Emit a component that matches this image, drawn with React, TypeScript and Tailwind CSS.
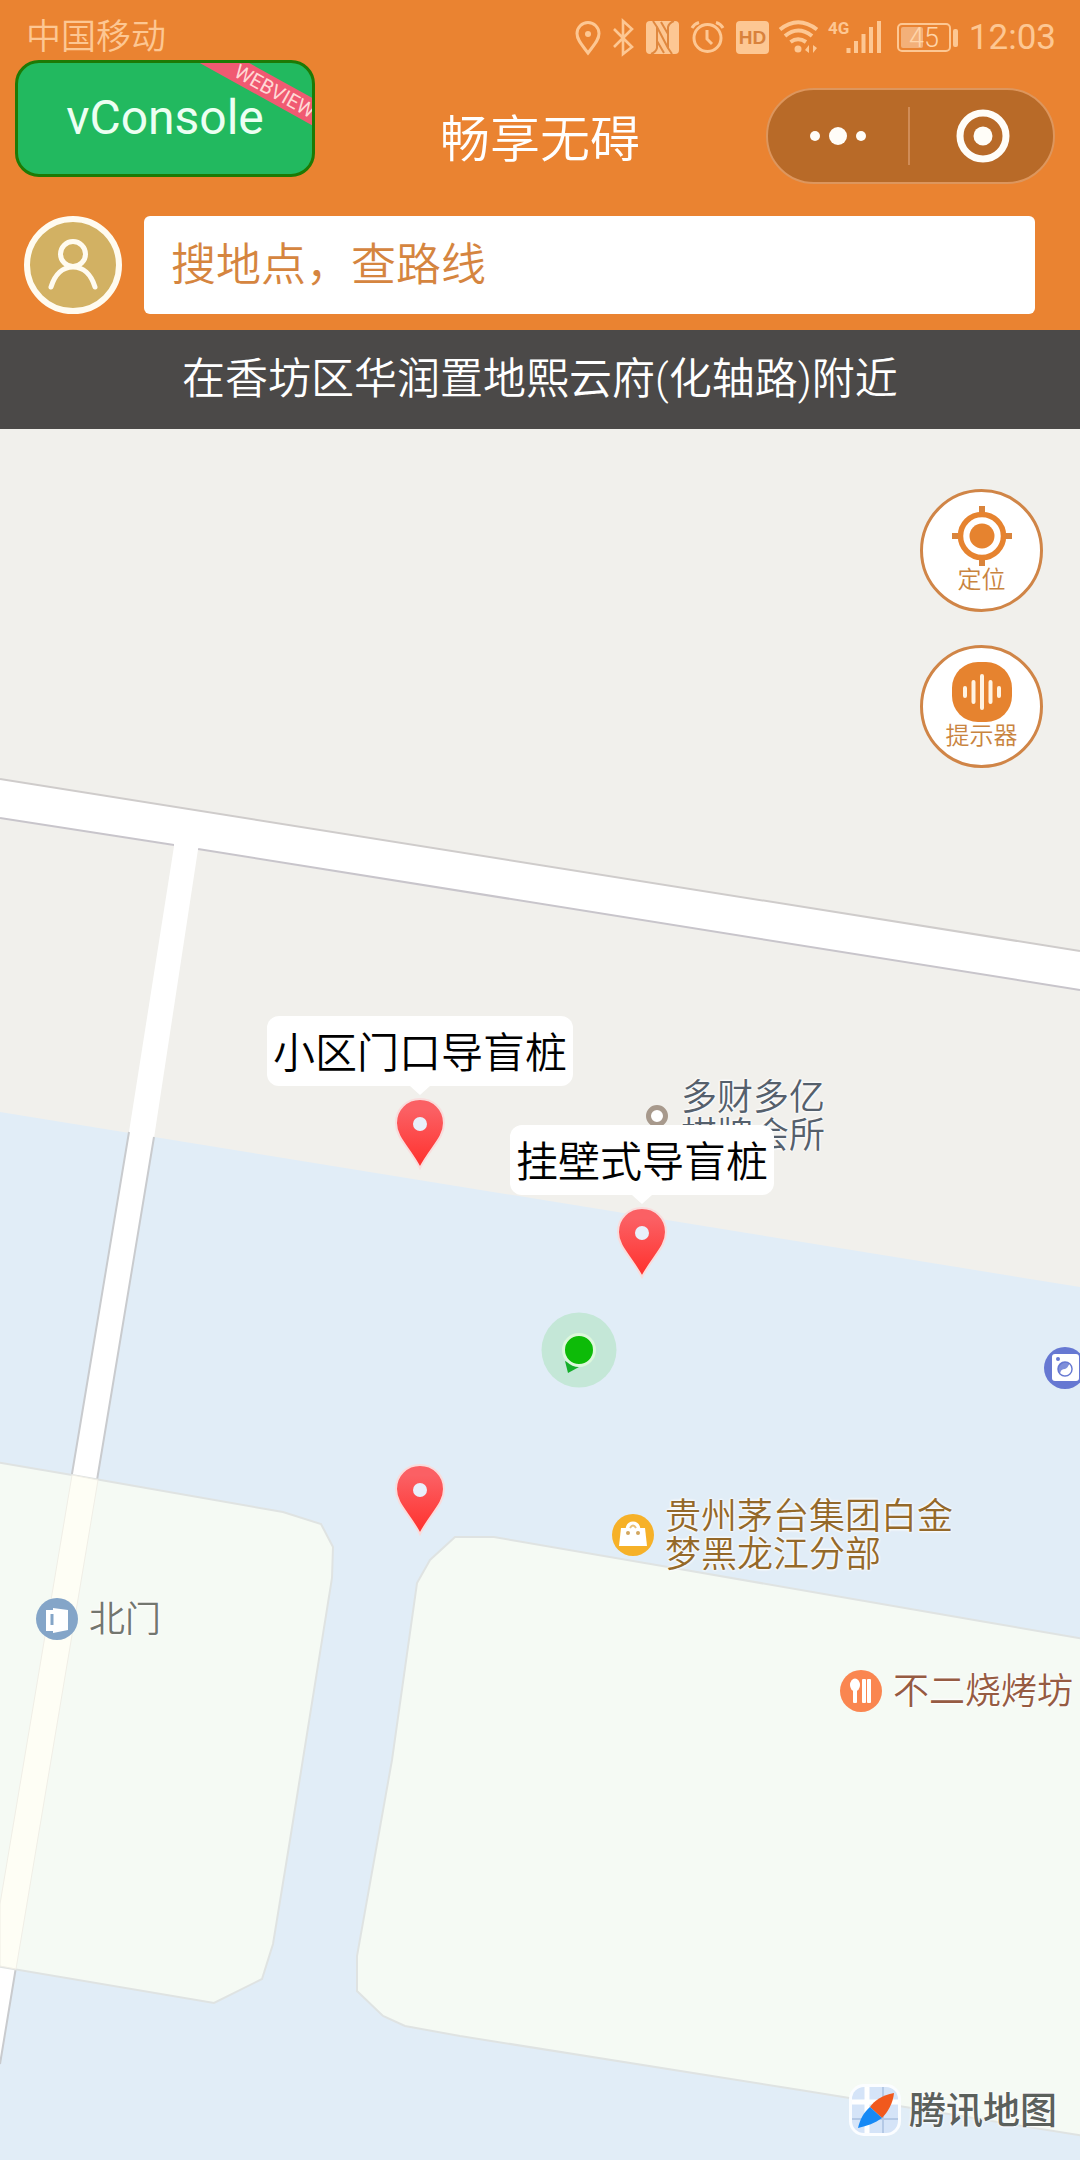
import { useState } from "react";

interface Pin {
    id: string;
    x: number;
    y: number;
    label?: string;
}

interface Poi {
    id: string;
    x: number;
    y: number;
    lines: string[];
    color: string;
    icon: React.ReactNode;
}

// map space, the same units as the viewBox of MapBase
const MAP_W = 1080;
const MAP_H = 1731;

const at = (x: number, y: number) => ({
    left: `${(x / MAP_W) * 100}%`,
    top: `${(y / MAP_H) * 100}%`,
});

const pins: Pin[] = [
    { id: "gate", x: 420, y: 738, label: "小区门口导盲桩" },
    { id: "wall", x: 642, y: 847, label: "挂壁式导盲桩" },
    { id: "plain", x: 420, y: 1104 },
];

const pois: Poi[] = [
    { id: "club", x: 657, y: 687, lines: ["多财多亿", "棋牌会所"], color: "left-6 text-[#55606c]", icon: <RingIcon /> },
    { id: "washer", x: 1065, y: 939, lines: [], color: "left-8 text-[#6277cf]", icon: <WasherIcon /> },
    { id: "shop", x: 633, y: 1106, lines: ["贵州茅台集团白金", "梦黑龙江分部"], color: "left-8 text-[#94692a]", icon: <BagIcon /> },
    { id: "gate-n", x: 57, y: 1190, lines: ["北门"], color: "left-8 text-[#73766f]", icon: <DoorIcon /> },
    { id: "bbq", x: 861, y: 1262, lines: ["不二烧烤坊"], color: "left-8 text-[#965b42]", icon: <FoodIcon /> },
];

function StatusIcons() {
    return (
        <svg width="384" height="40" viewBox="574 17 384 40" fill="none" stroke="#fdc793" strokeWidth="3">
            {/* location */}
            <path d="M587 52 C581 44 576 39 576 32.500 A11 11 0 0 1 598 32.500 C598 39 593 44 587 52 Z" />
            <circle cx="587" cy="33" r="3" fill="#fdc793" stroke="none" />
            {/* bluetooth */}
            <path d="M613 28 L631 46 L622 53 V20 L631 28 L613 46" strokeWidth="2.600" />
            {/* nfc */}
            <rect x="645" y="20" width="33" height="33" rx="4" fill="#fdc793" stroke="none" />
            <path d="M652 20 L656 26 V47 Q655 51 650 53 M671 53 L667 47 V26 Q668 22 673 20" stroke="#e0883f" strokeWidth="2" />
            <path d="M656 26 L667 47 M660 21 L667 33 M656 40 L663 52" stroke="#e0883f" strokeWidth="2" />
            {/* alarm */}
            <circle cx="706.500" cy="37" r="13.500" />
            <path d="M706 29 V38 L711 43" />
            <path d="M691 27 Q693 23 698 21.500 M722 27 Q720 23 715 21.500" />
            {/* hd */}
            <rect x="735" y="20" width="33" height="33" rx="4" fill="#fdc793" stroke="none" />
            <text x="751.500" y="43" textAnchor="middle" fill="#d9823c" stroke="none" className="font-['Liberation_Sans'] text-[19px] font-bold">HD</text>
            {/* wifi */}
            <path d="M779 28.500 Q797 14 816 28.500 M784 35 Q797 24 811 35 M789.500 41 Q797 35.500 805 41" strokeWidth="4" />
            <circle cx="797" cy="48" r="3.500" fill="#fdc793" stroke="none" />
            <path d="M808 44 V52 L804 49 Z M812 52 V44 L816 47 Z" fill="#fdc793" stroke="none" />
            {/* signal */}
            <text x="827" y="33" fill="#fdc793" stroke="none" className="font-['Roboto'] text-[17px] font-bold">4G</text>
            <path d="M847.500 47 V52 M855 40 V52 M862.500 33 V52 M870 26 V52 M878 20 V52" strokeWidth="4" />
            {/* battery */}
            <rect x="897" y="23" width="52" height="27" rx="4" strokeWidth="2" />
            <rect x="900" y="26" width="22" height="21" rx="2" fill="#f3b079" stroke="none" />
            <rect x="952" y="28" width="5" height="18" rx="2" fill="#fdc793" stroke="none" />
            <text x="923" y="46" textAnchor="middle" fill="#ffd5aa" stroke="none" className="font-['Roboto'] text-[27px]">45</text>
        </svg>
    );
}

function RingIcon() {
    return (
        <svg width="24" height="24" viewBox="0 0 24 24">
            <circle cx="12" cy="12" r="8.500" fill="#fff" stroke="#a7998c" strokeWidth="5" />
        </svg>
    );
}

function WasherIcon() {
    return (
        <svg width="44" height="44" viewBox="0 0 44 44">
            <circle cx="22" cy="22" r="21" fill="#6678d2" />
            <rect x="9" y="8" width="27" height="27" rx="3" fill="#fff" />
            <circle cx="15" cy="13" r="2" fill="#6678d2" />
            <circle cx="22" cy="23" r="6.500" fill="#fff" stroke="#6678d2" strokeWidth="2.500" />
            <path d="M17 27 Q18 23 22 23 Q25 22 26 18 A6.500 6.500 0 0 1 26 28 A6.500 6.500 0 0 1 17 27 Z" fill="#fff" />
            <path d="M17 27 A6.500 6.500 0 0 1 26 18 Q25 22 22 23 Q18 23 17 27 Z" fill="#7f8fda" />
        </svg>
    );
}

function BagIcon() {
    return (
        <svg width="44" height="44" viewBox="0 0 44 44">
            <circle cx="22" cy="22" r="21" fill="#f6b128" />
            <path d="M10 15 H34 L36 33 H8 Z" fill="#fff" />
            <path d="M16 16 Q17 10 22 10 Q27 10 28 16" fill="#fff" stroke="#fff" strokeWidth="3" />
            <path d="M19 15 Q22 10 25 15" fill="none" stroke="#e8c078" strokeWidth="2" />
            <circle cx="17" cy="20" r="2" fill="#d1a65f" />
            <circle cx="27" cy="20" r="2" fill="#d1a65f" />
        </svg>
    );
}

function DoorIcon() {
    return (
        <svg width="44" height="44" viewBox="0 0 44 44">
            <circle cx="22" cy="22" r="21" fill="#84a5c8" />
            <path d="M11 13 H18 V11 L33 13 V33 L18 36 V34 H11 Z" fill="#fff" />
            <path d="M17 17 V28" stroke="#84a5c8" strokeWidth="3" />
        </svg>
    );
}

function FoodIcon() {
    return (
        <svg width="44" height="44" viewBox="0 0 44 44" fill="#fff">
            <circle cx="22" cy="22" r="21" fill="#fa8650" />
            <ellipse cx="16" cy="16" rx="5" ry="6.500" />
            <rect x="14" y="20" width="4" height="14" rx="1" />
            <rect x="23" y="10" width="4" height="24" rx="1" />
            <rect x="28" y="10" width="4" height="24" rx="1" />
        </svg>
    );
}

function PinIcon() {
    return (
        <svg width="56" height="76" viewBox="0 0 56 76" className="block">
            <defs>
                <linearGradient id="pin" x1="0" y1="0" x2="0" y2="1">
                    <stop offset="0.150" stopColor="#fb6064" />
                    <stop offset="0.900" stopColor="#ff3532" />
                </linearGradient>
            </defs>
            <path
                d="M28 3 C41 3 52 13 52 27 C52 42 39 51 28 72 C17 51 4 42 4 27 C4 13 15 3 28 3 Z"
                fill="url(#pin)"
                stroke="#f9dcdc"
                strokeWidth="2"
            />
            <circle cx="28" cy="28" r="7" fill="#e9f0fb" />
        </svg>
    );
}

function MapBase() {
    return (
        <svg viewBox="0 429 1080 1731" preserveAspectRatio="none" className="absolute inset-0 h-full w-full">
            <rect x="0" y="429" width="1080" height="1731" fill="#f1f0ec" />
            <path d="M0 1112 L1080 1287 V2160 H0 Z" fill="#e1edf7" />
            {/* main road */}
            <path d="M0 779 L540 865 L1080 951 V990 L540 904 L0 818 Z" fill="#fff" />
            <path d="M0 779 L1080 951" stroke="#cfcccb" strokeWidth="2" />
            <path d="M0 818 L174 845 M198 849 L1080 990" stroke="#c8c5cb" strokeWidth="2" />
            {/* side road */}
            <path d="M175 840 L129 1132 L81 1420 L0 1904 V2064 L16 1967 L107 1420 L154 1138 L199 843 Z" fill="#fff" />
            <path d="M129 1132 L81 1420 L0 1904 M154 1137 L107 1420 L16 1967 L0 2064" fill="none" stroke="#c9cbce" strokeWidth="2" />
            {/* housing blocks */}
            <path
                d="M-4 1462 L72 1475 L283 1512 L321 1524 L333 1547 L332 1578 L290 1840 L273 1944 L262 1979 L214 2003 L-4 1966 Z"
                fill="#f5faf4"
                stroke="#dfe3e2"
                strokeWidth="2"
            />
            <path d="M72 1475 L0 1904 V1966 L16 1969 L98 1480 Z" fill="#fefef5" stroke="#f0eee6" />
            <path
                d="M455 1537 H494 L668 1567 L980 1621 L1084 1639 V2136 L800 2090 L460 2036 L405 2026 L383 2016 L357 1991 V1956 L392 1760 L417 1583 L430 1560 Z"
                fill="#f5faf4"
                stroke="#dfe3e2"
                strokeWidth="2"
            />
        </svg>
    );
}

function MapPin({ pin }: { pin: Pin }) {
    return (
        <div className="absolute flex -translate-x-1/2 -translate-y-full flex-col items-center" style={at(pin.x, pin.y + 5)}>
            {pin.label && (
                <div className="flex flex-col items-center">
                    <div className="rounded-xl bg-white px-[6px] pt-2 pb-[2px] text-[42px] leading-[60px] whitespace-nowrap text-black">
                        {pin.label}
                    </div>
                    <svg width="20" height="10" viewBox="0 0 20 10" className="block">
                        <path d="M0 0 H20 L10 9 Z" fill="#fff" />
                    </svg>
                </div>
            )}
            <PinIcon />
        </div>
    );
}

function MapPoi({ poi }: { poi: Poi }) {
    return (
        <div className="absolute h-0 w-0" style={at(poi.x, poi.y)}>
            <div className="absolute -translate-x-1/2 -translate-y-1/2 [&>svg]:max-w-none">{poi.icon}</div>
            {poi.lines.length > 0 && (
                <div
                    className={`absolute -translate-y-1/2 pt-[2px] text-[36px] leading-[38px] whitespace-nowrap [text-shadow:0_0_3px_#fff,0_0_3px_#fff,0_0_3px_#fff] ${poi.color}`}
                >
                    {poi.lines.map((line) => (
                        <div key={line}>{line}</div>
                    ))}
                </div>
            )}
        </div>
    );
}

function MapButton({ label, children }: { label: string; children: React.ReactNode }) {
    return (
        <button
            type="button"
            className="flex size-[123px] flex-col items-center rounded-full border-3 border-[#d08547] bg-white pt-[14px] text-2xl leading-7 text-[#c9843f]"
        >
            {children}
            {label}
        </button>
    );
}

export default function App() {
    const [query, setQuery] = useState("");

    return (
        <div className="flex min-h-screen flex-col overflow-hidden bg-[#f1f0ec] font-['Roboto','Noto_Sans_CJK_SC',sans-serif] font-[350]">
            <header className="relative bg-[#ea8331]">
                <div className="flex h-[72px] items-center justify-between pt-1 pr-6 pl-[26px] text-[35px] text-[#fdc793]">
                    <span>中国移动</span>
                    <div className="flex items-center gap-[10px]">
                        <StatusIcons />
                        <span className="font-['Roboto'] font-normal">12:03</span>
                    </div>
                </div>

                <div className="grid h-32 grid-cols-[1fr_auto_1fr] items-center pr-[25px] pl-[25px]">
                    <h1 className="col-start-2 pt-2 text-[50px] text-white">畅享无碍</h1>
                    <div className="flex h-24 w-[289px] items-center justify-self-end rounded-full border-2 border-[#dd965d] bg-[#b86a28]">
                        <button type="button" aria-label="更多" className="flex h-full flex-1 items-center justify-center">
                            <svg width="60" height="20" viewBox="0 0 60 20" fill="#fffdf8">
                                <circle cx="7" cy="10" r="5" />
                                <circle cx="30" cy="10" r="9" />
                                <circle cx="53" cy="10" r="5" />
                            </svg>
                        </button>
                        <div className="h-[58px] w-[2px] bg-[#d08c57]" />
                        <button type="button" aria-label="关闭" className="flex h-full flex-1 items-center justify-center pl-1">
                            <svg width="56" height="56" viewBox="0 0 56 56">
                                <circle cx="28" cy="28" r="23" fill="none" stroke="#fffdf8" strokeWidth="7" />
                                <circle cx="28" cy="28" r="9.500" fill="#fffdf8" />
                            </svg>
                        </button>
                    </div>
                </div>

                <div className="flex items-center gap-[22px] pt-4 pr-[45px] pb-4 pl-6">
                    <button type="button" aria-label="我的" className="flex size-[98px] shrink-0 items-center justify-center rounded-full border-6 border-[#fffbf0] bg-[#d2b163]">
                        <svg width="56" height="56" viewBox="0 0 56 56" fill="none" stroke="#fffbf0" strokeWidth="5" strokeLinecap="round">
                            <circle cx="28" cy="17" r="12.500" />
                            <path d="M6 50 C10 37 18 30 28 30 C38 30 46 37 50 50" />
                        </svg>
                    </button>
                    <input
                        type="text"
                        aria-label="搜地点，查路线"
                        placeholder="搜地点，查路线"
                        value={query}
                        onChange={(e) => setQuery(e.target.value)}
                        className="h-[98px] min-w-0 flex-1 rounded-md bg-white px-[27px] text-[45px] text-[#d5853f] outline-none placeholder:text-[#d5853f]"
                    />
                </div>

                {/* debug switch floats over the nav bar */}
                <button
                    type="button"
                    className="absolute top-[60px] left-[15px] flex h-[117px] w-[300px] items-center justify-center overflow-hidden rounded-3xl border-3 border-[#1d7a05] bg-[#22b95f] pb-[2px] text-[48px] font-normal text-[#ecfff2]"
                >
                    <span>vConsole</span>
                    <span className="absolute top-4 -right-[63px] w-[200px] rotate-[29deg] bg-[#f05a72] text-center text-xl leading-6 text-[#ffd9d6]">
                        WEBVIEW
                    </span>
                </button>
            </header>

            <p className="bg-[#4b4948] text-center text-[43px] leading-[99px] text-white">在香坊区华润置地熙云府(化轴路)附近</p>

            <main className="relative min-h-[1731px] flex-1 overflow-hidden">
                <MapBase />

                {pois.map((poi) => (
                    <MapPoi key={poi.id} poi={poi} />
                ))}

                {/* current position */}
                <svg width="76" height="76" viewBox="0 0 76 76" className="absolute -translate-x-1/2 -translate-y-1/2" style={at(579, 921)}>
                    <circle cx="38" cy="38" r="37.500" fill="#c4e7d7" />
                    <path d="M24 49 L27 61 L38 55 Z" fill="#14ae2a" />
                    <circle cx="38" cy="38" r="15.500" fill="#0dbb08" stroke="#dcf8dc" strokeWidth="3" />
                </svg>

                {pins.map((pin) => (
                    <MapPin key={pin.id} pin={pin} />
                ))}

                <div className="absolute top-[60px] right-[37px] flex flex-col gap-[33px]">
                    <MapButton label="定位">
                        <svg width="60" height="60" viewBox="0 0 60 60" className="shrink-0">
                            <path d="M30 0 V8 M30 52 V60 M0 30 H8 M52 30 H60" stroke="#d9843c" strokeWidth="6" />
                            <circle cx="30" cy="30" r="21.500" fill="none" stroke="#e6832f" strokeWidth="5.500" />
                            <circle cx="30" cy="30" r="12.500" fill="#e6832f" />
                        </svg>
                    </MapButton>
                    <MapButton label="提示器">
                        <svg width="60" height="60" viewBox="0 0 60 60" className="shrink-0">
                            <rect width="60" height="60" rx="26" fill="#e6832f" />
                            <path
                                d="M13 26 V34 M21.500 20 V40 M30 14 V46 M38.500 20 V40 M47 26 V34"
                                stroke="#fff3e2"
                                strokeWidth="4"
                                strokeLinecap="round"
                            />
                        </svg>
                    </MapButton>
                </div>

                <div className="absolute right-[23px] bottom-[22px] flex items-center gap-[7px] text-[37px] leading-[52px] font-medium text-[#5b605c] [text-shadow:0_0_3px_#fff,0_0_3px_#fff]">
                    <svg width="54" height="54" viewBox="0 0 54 54">
                        <defs>
                            <clipPath id="tile">
                                <rect x="4" y="4" width="46" height="46" rx="12" />
                            </clipPath>
                        </defs>
                        <rect x="1" y="1" width="52" height="52" rx="15" fill="#fbfdff" />
                        <g clipPath="url(#tile)">
                            <rect x="4" y="4" width="46" height="46" fill="#d5e4f8" />
                            <path d="M19 4 V50 M4 19 H50" stroke="#fff" strokeWidth="5" />
                            <path d="M35 4 V50 M4 36 H50" stroke="#b4c9e6" strokeWidth="2" />
                        </g>
                        <path d="M46 10 C34 12 26 18 22 24 L34 35 C40 29 45 20 46 10 Z" fill="#f1591d" />
                        <path d="M10 45 C12 36 16 29 22 24 L34 35 C27 40 19 43 10 45 Z" fill="#1689f5" />
                    </svg>
                    <span className="pt-1">腾讯地图</span>
                </div>
            </main>
        </div>
    );
}
